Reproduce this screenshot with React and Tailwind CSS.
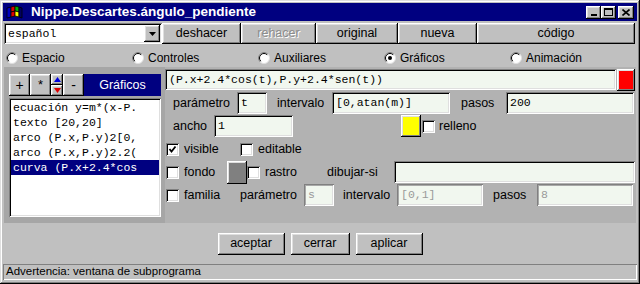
import React from 'react';

const RAISED = 'shadow-[inset_-1px_-1px_#000,inset_1px_1px_#fff,inset_-2px_-2px_#808080,inset_2px_2px_#dfdfdf]';
const SUNKEN = 'shadow-[inset_1px_1px_#808080,inset_-1px_-1px_#fff,inset_2px_2px_#000,inset_-2px_-2px_#dfdfdf]';
const SUNKEN_OFF = 'shadow-[inset_1px_1px_#808080,inset_-1px_-1px_#fff,inset_2px_2px_#a8a8a8,inset_-2px_-2px_#dfdfdf]';
const SANS = "font-['Liberation_Sans',Arial,sans-serif]";
const MONO = "font-['Liberation_Mono','Courier_New',monospace]";

const Button = ({ children, className = '', disabled }) => (
  <div
    className={`${RAISED} bg-[#c0c0c0] flex items-center justify-center text-[12.5px] ${
      disabled ? 'text-[#8c8c8c] [text-shadow:1px_1px_#fff]' : 'text-black'
    } ${className}`}
  >
    {children}
  </div>
);

const Field = ({ value, className = '', off }) => (
  <div
    className={`${off ? SUNKEN_OFF + ' text-[#9a9a9a]' : SUNKEN + ' text-black'} bg-[#f1f7ef] h-full shrink-0 flex items-center pl-[4px] ${MONO} text-[11.5px] ${className}`}
  >
    {value}
  </div>
);

const Check = ({ on }) => (
  <div className={`w-[13px] h-[13px] bg-white shrink-0 ${SUNKEN} flex items-center justify-center`}>
    {on && (
      <svg width="9" height="9" viewBox="0 0 9 9">
        <polyline points="1.5,4 3.5,6.5 7.5,1.5" fill="none" stroke="#000" strokeWidth="1.8" />
      </svg>
    )}
  </div>
);

const Radio = ({ on }) => (
  <svg width="12" height="12" viewBox="0 0 12 12" className="shrink-0">
    <circle cx="6" cy="6" r="5.5" fill="#fff" stroke="#dfdfdf" />
    <path d="M2.1 9.9 A5.5 5.5 0 0 1 9.9 2.1" fill="none" stroke="#808080" />
    <path d="M2.8 9.2 A4.5 4.5 0 0 1 9.2 2.8" fill="none" stroke="#000" />
    {on && <circle cx="6" cy="6" r="2" fill="#000" />}
  </svg>
);

const Swatch = ({ color, className = '' }) => (
  <div className={`${RAISED} p-[2px] shrink-0 ${className}`}>
    <div className={`w-full h-full ${color}`} />
  </div>
);

const Label = ({ children, className = '' }) => (
  <span className={`shrink-0 text-[12.5px] text-black whitespace-nowrap ${className}`}>{children}</span>
);

const tabs = [
  ['Espacio', false],
  ['Controles', false],
  ['Auxiliares', false],
  ['Gráficos', true],
  ['Animación', false],
];

const items = [
  'ecuación y=m*(x-P.',
  'texto [20,20]',
  'arco (P.x,P.y)2[0,',
  'arco (P.x,P.y)2.2(',
  'curva (P.x+2.4*cos',
];

export default function App() {
  return (
    <div
      className={`w-[640px] h-[284px] bg-[#c0c0c0] p-[3px] flex flex-col overflow-hidden ${SANS} shadow-[inset_-1px_-1px_#000,inset_1px_1px_#dfdfdf,inset_-2px_-2px_#808080,inset_2px_2px_#fff]`}
    >
      {/* title bar */}
      <div className="h-[18px] bg-[#000080] flex items-center pl-[3px] pr-[3px] shrink-0">
        <svg width="17" height="14" viewBox="0 0 17 14" className="shrink-0">
          <path d="M1 3 L5 2 L5 12 L1 13 Z" fill="#0000c0" stroke="#000" strokeWidth="0.8" />
          <path d="M5 2 L9 1 L9 6 L5 7 Z" fill="#e00000" stroke="#000" strokeWidth="0.8" />
          <path d="M5 7 L9 6 L9 11 L5 12 Z" fill="#e00000" stroke="#000" strokeWidth="0.8" />
          <path d="M9 1 L13 2 L13 7 L9 6 Z" fill="#00b000" stroke="#000" strokeWidth="0.8" />
          <path d="M9 6 L13 7 L13 12 L9 11 Z" fill="#ffff00" stroke="#000" strokeWidth="0.8" />
          <path d="M13 2 L16 3 L16 13 L13 12 Z" fill="#000060" stroke="#000" strokeWidth="0.8" />
        </svg>
        <span className="ml-[8px] text-white font-bold text-[13.5px] leading-none">Nippe.Descartes.ángulo_pendiente</span>
        <div className="ml-auto flex items-center">
          <div className={`${RAISED} bg-[#c0c0c0] w-[15px] h-[13px] flex items-end justify-center pb-[3px]`}>
            <div className="w-[6px] h-[2px] bg-black" />
          </div>
          <div className={`${RAISED} bg-[#c0c0c0] w-[15px] h-[13px] flex items-center justify-center`}>
            <div className="w-[9px] h-[8px] border border-black border-t-2" />
          </div>
          <div className={`${RAISED} bg-[#c0c0c0] w-[16px] h-[13px] ml-[2px] flex items-center justify-center`}>
            <svg width="8" height="7" viewBox="0 0 8 7">
              <path d="M0.5 0.5 L7.5 6.5 M7.5 0.5 L0.5 6.5" stroke="#000" strokeWidth="1.6" />
            </svg>
          </div>
        </div>
      </div>

      {/* top toolbar */}
      <div className="mt-[2px] h-[21px] flex shrink-0 pl-[1px]">
        <div className={`${SUNKEN} bg-white w-[158px] h-full flex items-center pl-[4px] pr-[2px] shrink-0`}>
          <span className={`${MONO} text-[11.5px] text-black`}>español</span>
          <div className={`${RAISED} bg-[#c0c0c0] ml-auto w-[16px] h-[17px] flex items-center justify-center`}>
            <svg width="7" height="4" viewBox="0 0 7 4">
              <path d="M0 0 H7 L3.5 4 Z" fill="#000" />
            </svg>
          </div>
        </div>
        <Button className="w-[79px]">deshacer</Button>
        <Button className="w-[75px]" disabled>rehacer</Button>
        <Button className="w-[82px]">original</Button>
        <Button className="w-[79px]">nueva</Button>
        <Button className="w-[158px]">código</Button>
      </div>

      {/* tabs */}
      <div className="h-[23px] pt-[4px] flex items-center shrink-0 pl-[3px]">
        {tabs.map(([name, on]) => (
          <div key={name} className="w-[126px] flex items-center gap-[4px] shrink-0">
            <Radio on={on} />
            <span className="text-[12px] text-black">{name}</span>
          </div>
        ))}
      </div>

      {/* main panel */}
      <div className="ml-[1px] w-[632px] h-[156px] bg-[#b2b2b2] flex shrink-0">
        <div className="w-[161px] h-full bg-[#a6a6a6] pl-[5px] pt-[7px] shrink-0">
          <div className="w-[152px] h-[22px] flex">
            <Button className="w-[21px] text-[14px]">+</Button>
            <Button className="w-[21px] text-[13px]">*</Button>
            <div className="w-[12px] flex flex-col">
              <div className={`${RAISED} bg-[#c0c0c0] h-[11px] flex items-center justify-center`}>
                <svg width="7" height="5" viewBox="0 0 7 5"><path d="M0 5 H7 L3.5 0 Z" fill="#0000e0" /></svg>
              </div>
              <div className={`${RAISED} bg-[#c0c0c0] h-[11px] flex items-center justify-center`}>
                <svg width="7" height="5" viewBox="0 0 7 5"><path d="M0 0 H7 L3.5 5 Z" fill="#e00000" /></svg>
              </div>
            </div>
            <Button className="w-[21px] text-[14px]">-</Button>
            <div className="flex-1 bg-[#000080] text-white text-[12.5px] flex items-center justify-center">Gráficos</div>
          </div>
          <div className={`mt-[2px] w-[152px] h-[119px] bg-white ${SUNKEN} pt-[2px] px-[2px]`}>
            {items.map((t, i) => (
              <div
                key={t}
                className={`h-[15px] pl-[2px] flex items-center ${MONO} text-[11.5px] whitespace-pre ${
                  i === 4 ? 'bg-[#000080] text-white' : 'text-black'
                }`}
              >
                {t}
              </div>
            ))}
          </div>
        </div>

        <div className="flex-1 flex flex-col pt-[2px]">
          <div className="h-[21px] flex">
            <Field value="(P.x+2.4*cos(t),P.y+2.4*sen(t))" className="w-[451px]" />
            <Swatch color="bg-[#ff0000]" className="ml-[1px] w-[18px] h-[22px]" />
          </div>

          <div className="mt-[2px] h-[22px] flex items-center pl-[8px]">
            <Label className="w-[64px]">parámetro</Label>
            <Field value="t" className="w-[30px]" />
            <Label className="w-[65px] pl-[10px]">intervalo</Label>
            <Field value="[0,atan(m)]" className="w-[118px]" />
            <Label className="w-[56px] pl-[11px]">pasos</Label>
            <Field value="200" className="w-[128px]" />
          </div>

          <div className="mt-[1px] h-[22px] flex items-center pl-[8px]">
            <Label className="w-[41px]">ancho</Label>
            <Field value="1" className="w-[79px]" />
            <div className="w-[108px] shrink-0" />
            <Swatch color="bg-[#ffff00]" className="w-[20px] h-[22px]" />
            <div className="ml-[1px]"><Check /></div>
            <Label className="pl-[4px]">relleno</Label>
          </div>

          <div className="h-[24px] flex items-center pl-[1px]">
            <Check on />
            <Label className="w-[61px] pl-[5px]">visible</Label>
            <Check />
            <Label className="pl-[5px]">editable</Label>
          </div>

          <div className="h-[22px] flex items-center pl-[1px]">
            <Check />
            <Label className="w-[48px] pl-[5px]">fondo</Label>
            <Swatch color="bg-[#808080]" className="w-[20px] h-[23px]" />
            <Check />
            <Label className="w-[67px] pl-[5px]">rastro</Label>
            <Label className="w-[67px]">dibujar-si</Label>
            <Field value="" className="w-[241px]" />
          </div>

          <div className="mt-[1px] h-[22px] flex items-center pl-[1px]">
            <Check />
            <Label className="w-[61px] pl-[5px]">familia</Label>
            <Label className="w-[64px]">parámetro</Label>
            <Field value="s" off className="w-[30px]" />
            <Label className="w-[63px] pl-[9px]">intervalo</Label>
            <Field value="[0,1]" off className="w-[86px]" />
            <Label className="w-[54px] pl-[10px]">pasos</Label>
            <Field value="8" off className="w-[96px]" />
          </div>
        </div>
      </div>

      {/* dialog buttons */}
      <div className="h-[41px] flex items-center justify-center gap-[6px] shrink-0">
        <Button className="w-[67px] h-[22px]">aceptar</Button>
        <Button className="w-[59px] h-[22px]">cerrar</Button>
        <Button className="w-[67px] h-[22px]">aplicar</Button>
      </div>

      {/* status bar */}
      <div className="h-[16px] shadow-[inset_1px_1px_#808080,inset_-1px_-1px_#fff] flex items-center pl-[3px] shrink-0">
        <span className="text-[11.5px] text-black">Advertencia: ventana de subprograma</span>
      </div>
    </div>
  );
}
